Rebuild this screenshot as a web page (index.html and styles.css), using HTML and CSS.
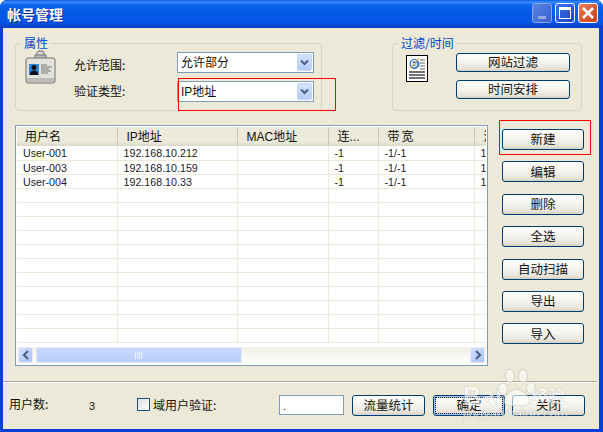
FILE: index.html
```html
<!DOCTYPE html>
<html lang="zh">
<head>
<meta charset="utf-8">
<title>帐号管理</title>
<link rel="stylesheet" href="styles.css">
</head>
<body>
<div class="window">
  <div class="titlebar">
    <span class="title">帐号管理</span>
    <div class="winbtns">
      <span class="wb wb-min"><i class="min-glyph"></i></span>
      <span class="wb wb-max"><i class="max-glyph"></i></span>
      <span class="wb wb-close"><svg width="20" height="20" viewBox="0 0 20 20"><path d="M5 5l10 10M15 5L5 15" stroke="#fff" stroke-width="2.6"/></svg></span>
    </div>
  </div>
  <div class="client">
    <div class="top">
      <fieldset class="group group-a">
        <legend>属性</legend>
        <div class="group-inner">
          <svg class="badge" width="31" height="34" viewBox="0 0 31 34">
            <path d="M12 6V2.500q0-1.500 3.500-1.500t3.500 1.500V6" fill="#d8d8d8" stroke="#666"/>
            <rect x="10" y="5" width="11" height="4" fill="#bbb" stroke="#777"/>
            <rect x="1" y="8" width="29" height="25" rx="2" fill="#e4e2dc" stroke="#6e6e6e"/>
            <rect x="2" y="28" width="27" height="4" fill="#bdbbb5"/>
            <rect x="4" y="14" width="10" height="11" fill="#2f86d8"/>
            <circle cx="9" cy="17.500" r="2.500" fill="#111"/>
            <path d="M5 25q0-4.500 4-4.500t4 4.500z" fill="#111"/>
            <path d="M16 15h6M16 17h11M16 19h8M16 21h10M16 23h7" stroke="#777" stroke-width="1.200"/>
          </svg>
          <div class="fields">
            <div class="field"><span class="field-label">允许范围:</span><div class="select"><span class="select-text">允许部分</span><span class="select-arrow"><svg width="9" height="7" viewBox="0 0 9 7"><path d="M1 1.500l3.500 3.500 3.500-3.500" fill="none" stroke="#4d6185" stroke-width="2"/></svg></span></div></div>
            <div class="field"><span class="field-label">验证类型:</span><div class="select"><span class="select-text">IP地址</span><span class="select-arrow"><svg width="9" height="7" viewBox="0 0 9 7"><path d="M1 1.500l3.500 3.500 3.500-3.500" fill="none" stroke="#4d6185" stroke-width="2"/></svg></span></div></div>
          </div>
        </div>
      </fieldset>
      <fieldset class="group group-b">
        <legend>过滤/时间</legend>
        <div class="group-inner group-inner-b">
          <svg class="ie" width="22" height="27" viewBox="0 0 22 27">
            <rect x=".5" y=".5" width="21" height="26" fill="#fff" stroke="#000"/>
            <path d="M14 5h5M14 8h5M14 11h5M14 14h5" stroke="#999" stroke-width="1.500"/>
            <path d="M3 17h16M3 20h16M3 23h16" stroke="#444" stroke-width="1.600"/>
            <circle cx="8.500" cy="9" r="5" fill="#2f6fd0"/>
            <path d="M5.500 9h6M11 7q-2.500-3-5 0q-1.500 3 1 4.500q2 .7 4-1" fill="none" stroke="#fff" stroke-width="1.300"/>
            <path d="M3 13q5-2 10-10" fill="none" stroke="#e0a020"/>
          </svg>
          <div class="stack">
            <button class="btn btn-wide">网站过滤</button>
            <button class="btn btn-wide">时间安排</button>
          </div>
        </div>
      </fieldset>
    </div>
    <div class="middle">
      <div class="list">
        <div class="list-scroll">
          <table class="grid">
            <colgroup><col class="c1"><col class="c2"><col class="c3"><col class="c4"><col class="c5"><col class="c6"></colgroup>
            <thead>
              <tr><th>用户名</th><th>IP地址</th><th>MAC地址</th><th>连...</th><th class="th-wide">带宽</th><th>流量</th></tr>
            </thead>
            <tbody>
              <tr><td>User-001</td><td>192.168.10.212</td><td></td><td>-1</td><td>-1/-1</td><td>1</td></tr>
              <tr><td>User-003</td><td>192.168.10.159</td><td></td><td>-1</td><td>-1/-1</td><td>1</td></tr>
              <tr><td>User-004</td><td>192.168.10.33</td><td></td><td>-1</td><td>-1/-1</td><td>1</td></tr>
              <tr><td></td><td></td><td></td><td></td><td></td><td></td></tr>
              <tr><td></td><td></td><td></td><td></td><td></td><td></td></tr>
              <tr><td></td><td></td><td></td><td></td><td></td><td></td></tr>
              <tr><td></td><td></td><td></td><td></td><td></td><td></td></tr>
              <tr><td></td><td></td><td></td><td></td><td></td><td></td></tr>
              <tr><td></td><td></td><td></td><td></td><td></td><td></td></tr>
              <tr><td></td><td></td><td></td><td></td><td></td><td></td></tr>
              <tr><td></td><td></td><td></td><td></td><td></td><td></td></tr>
              <tr><td></td><td></td><td></td><td></td><td></td><td></td></tr>
              <tr><td></td><td></td><td></td><td></td><td></td><td></td></tr>
              <tr><td></td><td></td><td></td><td></td><td></td><td></td></tr>
            </tbody>
          </table>
        </div>
        <div class="scrollbar">
          <span class="sb-btn"><svg width="8" height="10" viewBox="0 0 8 10"><path d="M6 1L2 5l4 4" fill="none" stroke="#4d6185" stroke-width="2.200"/></svg></span>
          <span class="sb-thumb"><svg width="8" height="7" viewBox="0 0 8 7"><path d="M.5 0v7M2.500 0v7M4.500 0v7M6.500 0v7" stroke="#eef3ff"/></svg></span>
          <span class="sb-track"></span>
          <span class="sb-btn"><svg width="8" height="10" viewBox="0 0 8 10"><path d="M2 1l4 4-4 4" fill="none" stroke="#4d6185" stroke-width="2.200"/></svg></span>
        </div>
      </div>
      <div class="side">
        <button class="btn btn-side">新建</button>
        <button class="btn btn-side">编辑</button>
        <button class="btn btn-side">删除</button>
        <button class="btn btn-side">全选</button>
        <button class="btn btn-side">自动扫描</button>
        <button class="btn btn-side">导出</button>
        <button class="btn btn-side">导入</button>
      </div>
    </div>
    <div class="separator"></div>
    <div class="footer">
      <span class="count-label">用户数:</span>
      <span class="count">3</span>
      <label class="check"><span class="checkbox"></span>域用户验证:</label>
      <div class="input">.</div>
      <button class="btn btn-stat">流量统计</button>
      <button class="btn btn-ok"><span class="focus">确定</span></button>
      <button class="btn btn-close">关闭</button>
    </div>
  </div>
  <div class="mark mark-type"></div>
  <div class="mark mark-new"></div>
  <div class="watermark">
    <span class="wm-bai">Bai</span>
    <svg class="wm-paw" width="44" height="44" viewBox="0 0 44 44">
      <g fill="#fff" fill-opacity=".6" stroke="#9a9a90" stroke-opacity=".35">
        <ellipse cx="9" cy="23" rx="4.500" ry="6"/>
        <ellipse cx="16" cy="10" rx="4.500" ry="6.500"/>
        <ellipse cx="29" cy="10" rx="4.500" ry="6.500"/>
        <ellipse cx="37" cy="22" rx="4.500" ry="6"/>
        <path d="M10 37q0-11 13-14q12 3 13 14q-6 5-13 2q-7 3-13-2z"/>
      </g>
    </svg>
    <span class="wm-jy">经验</span>
    <span class="wm-url">jingyan.baidu.com</span>
  </div>
</div>
</body>
</html>
```
FILE: styles.css
```css
* { box-sizing: border-box; }
html, body { margin: 0; padding: 0; background: #fff; }
body {
  width: 603px; height: 432px; overflow: hidden;
  font-family: "Liberation Sans", "Noto Sans CJK SC", sans-serif;
  font-size: 12px; color: #111;
}
.window {
  position: relative; width: 603px; height: 432px;
  display: flex; flex-direction: column;
  background: #0a40d8;
  border-radius: 7px 7px 0 0;
  overflow: hidden;
  padding: 0 4px 3px 3px;
}
.titlebar {
  height: 28px; flex: none; margin: 0 -4px 0 -3px; padding: 0 6px 0 7px;
  display: flex; align-items: center; justify-content: space-between;
  background: linear-gradient(#0a5ae6 0, #3b8ffb 2px, #0a63ee 5px, #0458e4 14px, #0556e8 22px, #0a40cc 27px, #0838b4 28px);
}
.title {
  color: #fff; font-weight: 700; font-size: 14px;
  font-family: "Noto Sans CJK SC", sans-serif; line-height: 1;
  text-shadow: 1px 1px 0 #0a2a90;
  margin-top: -1px;
}
.winbtns { display: flex; gap: 3px; margin-top: -2px; margin-right: -1px; }
.wb {
  width: 20px; height: 20px; border: 1px solid #fff; border-radius: 3px;
  display: flex; align-items: center; justify-content: center;
}
.wb svg { margin: -1px; }
.wb-min { background: linear-gradient(135deg, #5c84e4, #3862d0); border-color: #8aa6ea; width: 20px; }
.wb-max { background: linear-gradient(135deg, #3f70ea, #1c48c8); }
.wb-close { background: linear-gradient(135deg, #e8805c, #c83c14); }
.min-glyph { width: 8px; height: 3px; background: #92a8e8; margin: 8px 0 0 -1px; }
.max-glyph { width: 12px; height: 12px; border: 1px solid #fff; border-top-width: 3px; }
.client {
  flex: 1; min-height: 0; background: #ece9d8;
  display: flex; flex-direction: column;
}
.top { display: flex; justify-content: space-between; padding: 8px 17px 0 12px; height: 97px; flex: none; }
.group {
  margin: 0; padding: 0; height: 75px;
  border: 1px solid #d6d3c4; border-radius: 4px;
  min-width: 0;
}
.group legend {
  color: #0046d5; font-size: 12px; line-height: 14px; padding: 0 2px; margin-left: 6px;
  font-family: "Noto Sans CJK SC", sans-serif;
}
.group-a { width: 307px; }
.group-b { width: 190px; }
.group-inner { display: flex; padding: 0 0 0 9px; }
.badge { flex: none; margin-top: 0; }
.fields { display: flex; flex-direction: column; gap: 8px; padding: 2px 0 0 18px; }
.field { display: flex; align-items: center; height: 21px; }
.field-label { width: 103px; font-family: "Noto Sans CJK SC", sans-serif; font-size: 12px; }
.field:first-child .field-label { padding-top: 3px; }
.field:last-child .field-label { padding-bottom: 2px; }
.select {
  width: 137px; height: 21px; display: flex; align-items: stretch;
  background: #fff; border: 1px solid #7f9db9; padding: 1px;
}
.select-text { flex: 1; padding-left: 2px; line-height: 18px; }
.select-arrow {
  width: 15px; display: flex; align-items: center; justify-content: center;
  background: linear-gradient(#d5e2fd, #b4cbf9); border-radius: 2px;
  border: 1px solid #c3d4fc;
}
.group-inner-b { padding: 5px 0 0 13px; }
.ie { flex: none; margin-top: 0; }
.stack { display: flex; flex-direction: column; gap: 8px; margin-left: 28px; margin-top: -2px; }
.btn {
  font: inherit; color: #111; padding: 0; margin: 0;
  border: 1px solid #003c74; border-radius: 3px;
  background: linear-gradient(#fff, #f4f3ee 50%, #e6e3d8 85%, #d4d0c4);
  display: flex; align-items: center; justify-content: center;
  font-family: "Noto Sans CJK SC", sans-serif; font-size: 12.500px; line-height: 1;
}
.btn-wide { width: 114px; height: 19px; }
.middle { display: flex; height: 241px; flex: none; padding: 0 0 0 12px; }
.list {
  width: 473px; height: 241px; border: 1px solid #7f9db9; background: #fff;
  display: flex; flex-direction: column; padding: 1px 1px 1px 1px;
}
.list-scroll { flex: 1; min-height: 0; overflow: hidden; }
.grid { border-collapse: collapse; table-layout: fixed; width: 487px; }
.c1 { width: 100px; } .c2 { width: 120px; } .c3 { width: 91px; }
.c4 { width: 50px; } .c5 { width: 96px; } .c6 { width: 30px; }
.grid th {
  height: 19px; padding: 0 0 2px 9px; text-align: left; font-weight: 400;
  background: linear-gradient(#ebeadb 80%, #d9d6c6);
  font-family: "Liberation Sans", "Noto Sans CJK SC", sans-serif;
  white-space: nowrap; overflow: hidden;
  border-right: 1px solid #cbc7b8;
}
.grid th:first-child { padding-left: 8px; }
.grid .th-wide { letter-spacing: 2px; }
.grid td {
  height: 14px; padding: 1px 0 0 6px; line-height: 12px; font-size: 10.700px;
  border-right: 1px solid #ece9d8; border-bottom: 1px solid #ece9d8;
  white-space: nowrap; overflow: hidden; color: #222;
}
.scrollbar {
  height: 17px; flex: none; display: flex; align-items: stretch;
  background: linear-gradient(#f2f0e6, #fefefe);
  padding: 0 1px 1px 1px;
}
.sb-btn {
  width: 15px; flex: none; display: flex; align-items: center; justify-content: center;
  background: linear-gradient(135deg, #d4e0fd, #a9c1f7);
  border: 1px solid #e4ecfe; border-radius: 2px;
}
.sb-thumb {
  width: 206px; flex: none; margin-left: 3px; display: flex; align-items: center; justify-content: center;
  background: linear-gradient(#c9d8fc, #b8cefb);
  border: 1px solid #dfe8fd; border-radius: 2px;
}
.sb-track { flex: 1; }
.side { display: flex; flex-direction: column; gap: 11.400px; padding: 4px 0 0 14px; }
.btn-side { width: 82px; height: 21px; flex: none; }
.separator { flex: none; margin-top: 15px; height: 2px; background: #aca899; border-bottom: 1px solid #fff; margin-right: 2px; }
.footer { flex: 1; display: flex; align-items: center; position: relative; padding: 0 0 2px 6px; }
.count-label { width: 80px; font-family: "Noto Sans CJK SC", sans-serif; padding-bottom: 3px; }
.count { width: 48px; font-size: 11px; padding-top: 1px; }
.check { display: flex; align-items: center; gap: 3px; width: 142px; font-family: "Noto Sans CJK SC", sans-serif; margin-top: -1px; }
.checkbox {
  width: 13px; height: 13px; border: 1px solid #1c5180;
  background: linear-gradient(135deg, #dcdcd7, #fff);
}
.input {
  width: 65px; height: 20px; background: #fff; border: 1px solid #7f9db9;
  padding-left: 3px; line-height: 20px; margin-right: 8px; font-size: 11px;
}
.btn-stat { width: 73px; height: 21px; margin-right: 8px; }
.btn-ok {
  width: 72px; height: 21px; margin-right: 7px; padding: 1px;
  box-shadow: inset 0 0 0 2px #a6c2ef;
}
.focus {
  display: flex; width: 100%; height: 100%; align-items: center; justify-content: center;
  border: 1px dotted #222;
}
.btn-close { width: 73px; height: 21px; }
.mark { position: absolute; border: 1px solid #f00; pointer-events: none; }
.mark-type { left: 178px; top: 78px; width: 158px; height: 33px; }
.mark-new { left: 499px; top: 120px; width: 92px; height: 35px; }
.watermark { position: absolute; left: 460px; top: 365px; width: 125px; height: 60px; color: #fff; pointer-events: none; }
.watermark span { position: absolute; white-space: nowrap; }
.wm-bai { left: 3px; top: 17px; font: 700 25px/28px "Liberation Sans", sans-serif; opacity: .6; text-shadow: 0 0 1px #888; }
.wm-paw { position: absolute; left: 34px; top: 1px; }
.wm-jy { left: 71px; top: 20px; font: 700 17px/22px "Noto Sans CJK SC", sans-serif; opacity: .6; text-shadow: 0 0 1px #777; }
.wm-url { left: 3px; top: 42px; font: 400 13px/14px "Liberation Sans", sans-serif; opacity: .6; text-shadow: 0 0 1px #777; }
```
